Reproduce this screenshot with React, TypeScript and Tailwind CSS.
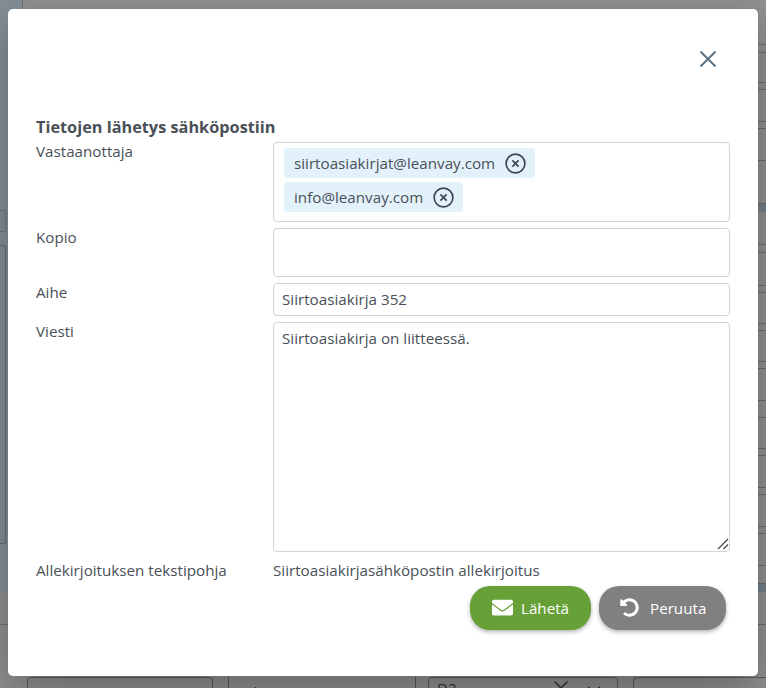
import React from 'react';
import { FaEnvelope, FaUndoAlt } from 'react-icons/fa';
import { X, ChevronDown } from 'lucide-react';

const inputBox = 'w-full border border-[#ced4da] rounded-[4px] bg-white';

// taustalla näkyvän taulukon rivit oikeassa reunassa
const bgRows = [45, 8, 30, 7, 32, 7, 32, 43, 8, 33, 8, 33, 7, 31, 7, 31, 7, 32, 17, 31, 7, 32, 7, 32, 7, 32, 18, 8, 33];

const Chip: React.FC<{ label: string }> = ({ label }) => (
  <div className="flex items-center h-[30px] w-fit rounded-[4px] bg-[#e3f1fb] pl-[10px] pr-[9px] text-[#495057]">
    <span>{label}</span>
    <svg viewBox="0 0 21 21" className="w-[21px] h-[21px] ml-[10px]" fill="none" stroke="#3f474e" strokeWidth="1.7">
      <circle cx="10.5" cy="10.5" r="9.4" />
      <path d="M7.4 7.4l6.2 6.2M13.6 7.4l-6.2 6.2" />
    </svg>
  </div>
);

const Row: React.FC<{ label: string; className?: string; children: React.ReactNode }> = ({ label, className, children }) => (
  <div className={`flex ${className ?? ''}`}>
    <div className="w-[237px] shrink-0 -mt-px text-[#495057]">{label}</div>
    <div className="w-[457px]">{children}</div>
  </div>
);

export default function App() {
  return (
    <div className="relative w-[766px] h-[688px] overflow-hidden bg-[#919191] font-['Open_Sans',sans-serif] text-[15.2px] leading-[20px]">
      {/* himmennetty tausta */}
      <div className="flex justify-between h-[676px]">
        <div className="w-[23px] flex flex-col">
          <div className="h-[592px] bg-[#848f98] border-r border-[#6f767c]">
            <div className="h-[210px]" />
            <div className="h-[22px] w-[6px] border-y border-r border-[#70777d]" />
            <div className="h-[13px]" />
            <div className="h-[299px] w-[6px] border-y border-r rounded-r-[3px] border-[#666d73]" />
          </div>
          <div className="h-[33px] border-b border-[#707070]" />
        </div>
        <div className="w-[8px] flex flex-col">
          {bgRows.map((h, i) => (
            <div
              key={i}
              style={{ height: h }}
              className={`shrink-0 border-b ${i === 8 || i === 27 ? 'bg-[#75808a] border-[#75808a]' : 'border-[#6c6c6c]'}`}
            />
          ))}
        </div>
      </div>
      <div className="flex h-[12px] mt-px pl-[27px] text-[#333]">
        <div className="w-[186px] h-[20px] border border-[#5c5c5c] rounded-[4px]" />
        <div className="ml-[15px] w-[188px] h-[20px] border-x border-[#5c5c5c] flex pl-[7px] pt-[5px] pr-[12px] justify-between">
          <span>Valitse</span>
          <ChevronDown className="w-[22px] h-[22px] mt-px" strokeWidth={1.5} />
        </div>
        <div className="ml-[12px] w-[190px] h-[20px] border border-[#5c5c5c] rounded-[4px] flex pl-[8px] pr-[12px] justify-between">
          <span>D2</span>
          <div className="flex gap-[10px]">
            <X className="w-[24px] h-[24px] -mt-[2px]" strokeWidth={1.5} />
            <ChevronDown className="w-[22px] h-[22px] mt-px" strokeWidth={1.5} />
          </div>
        </div>
        <div className="ml-[15px] flex-1 h-[20px] border-y border-l border-[#5c5c5c] rounded-l-[4px]" />
      </div>

      <div className="absolute left-[8px] top-[9px] w-[750px] h-[667px] rounded-[5px] bg-white shadow-[0_16px_48px_rgba(0,0,0,0.3)] pl-[28px] pt-[108px]">
        <button type="button" className="absolute right-[40px] top-[40px] text-[#5a7184]" aria-label="Sulje">
          <svg viewBox="0 0 20 20" className="w-[20px] h-[20px]" fill="none" stroke="currentColor" strokeWidth="1.9">
            <path d="M2.5 2.5l15 15M17.5 2.5l-15 15" />
          </svg>
        </button>

        <h2 className="font-bold text-[#495057] text-[16.3px] leading-[20px] h-[25px]">Tietojen lähetys sähköpostiin</h2>

        <Row label="Vastaanottaja">
          <div className={`${inputBox} h-[80px] pl-[10px] pt-[5px] flex flex-col gap-[4px]`}>
            <Chip label="siirtoasiakirjat@leanvay.com" />
            <Chip label="info@leanvay.com" />
          </div>
        </Row>

        <Row label="Kopio" className="mt-[6px]">
          <div className={`${inputBox} h-[49px]`} />
        </Row>

        <Row label="Aihe" className="mt-[6px]">
          <input
            readOnly
            value="Siirtoasiakirja 352"
            className={`${inputBox} h-[33px] px-2 pb-[2px] text-[#495057] outline-none`}
          />
        </Row>

        <Row label="Viesti" className="mt-[6px]">
          <div className="relative">
            <textarea
              readOnly
              value="Siirtoasiakirja on liitteessä."
              className={`${inputBox} block h-[230px] px-2 py-[5px] text-[#495057] outline-none resize-none`}
            />
            <svg viewBox="0 0 12 12" className="absolute right-px bottom-[2px] w-[12px] h-[12px]" fill="none" stroke="#444" strokeWidth="1.2">
              <path d="M1 11L11 1M6.5 11L11 6.5" />
            </svg>
          </div>
        </Row>

        <Row label="Allekirjoituksen tekstipohja" className="mt-[9px]">
          <div className="-mt-px text-[#495057]">Siirtoasiakirjasähköpostin allekirjoitus</div>
        </Row>

        <div className="flex justify-end gap-2 w-[690px] mt-[6px]">
          <button type="button" className="flex items-center h-[44px] w-[121px] rounded-[20px] bg-[#67a037] text-white pl-[22px] pb-px shadow-[0_2px_4px_rgba(0,0,0,0.3)]">
            <FaEnvelope className="w-[21px] h-[21px] mr-[8px]" />
            Lähetä
          </button>
          <button type="button" className="flex items-center h-[44px] w-[127px] rounded-[20px] bg-[#808080] text-white pl-[21px] pb-px shadow-[0_2px_4px_rgba(0,0,0,0.3)]">
            <FaUndoAlt className="w-[19px] h-[19px] mr-[11px]" />
            Peruuta
          </button>
        </div>
      </div>
    </div>
  );
}
